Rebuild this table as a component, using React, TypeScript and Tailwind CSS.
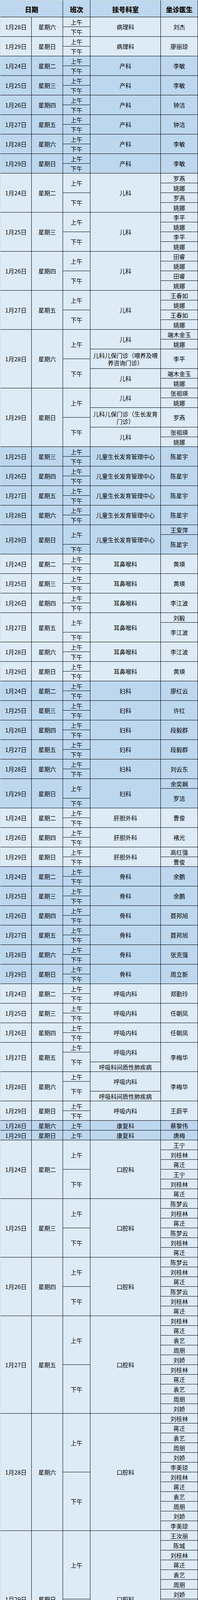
import React from "react";

type Part = [string, number];
type Block = {
  date: string;
  week: string;
  bg: string;
  shifts: Part[];
  depts: Part[];
  docs: Part[];
};

const H: Record<number, string> = {
  1: "h-[24px]",
  2: "h-[49px]",
  3: "h-[74px]",
  4: "h-[99px]",
  5: "h-[124px]",
  6: "h-[149px]",
  7: "h-[174px]",
  8: "h-[199px]",
  9: "h-[224px]",
  10: "h-[249px]",
  11: "h-[274px]",
  12: "h-[299px]",
  13: "h-[324px]",
  14: "h-[349px]",
};

const L = "bg-[#ddebf7]";
const D = "bg-[#bdd7ee]";

const AMPM: Part[] = [
  ["上午", 1],
  ["下午", 1],
];

const simple = (bg: string, date: string, week: string, dept: string, doc: string): Block => ({
  bg,
  date,
  week,
  shifts: AMPM,
  depts: [[dept, 2]],
  docs: [[doc, 2]],
});

const kids = (date: string, week: string, a: string, b: string): Block => ({
  bg: L,
  date,
  week,
  shifts: [
    ["上午", 2],
    ["下午", 2],
  ],
  depts: [["儿科", 4]],
  docs: [
    [a, 1],
    [b, 1],
    [a, 1],
    [b, 1],
  ],
});

const oral = (date: string, week: string, names: string[]): Block => ({
  bg: L,
  date,
  week,
  shifts: [
    ["上午", names.length],
    ["下午", names.length],
  ],
  depts: [["口腔科", names.length * 2]],
  docs: [...names, ...names].map((n) => [n, 1] as Part),
});

const blocks: Block[] = [
  simple(L, "1月28日", "星期六", "病理科", "刘杰"),
  simple(L, "1月29日", "星期日", "病理科", "廖丽琼"),

  simple(D, "1月24日", "星期二", "产科", "李敏"),
  simple(D, "1月25日", "星期三", "产科", "李敏"),
  simple(D, "1月26日", "星期四", "产科", "钟洁"),
  simple(D, "1月27日", "星期五", "产科", "钟洁"),
  simple(D, "1月28日", "星期六", "产科", "李敏"),
  simple(D, "1月29日", "星期日", "产科", "李敏"),

  kids("1月24日", "星期二", "罗燕", "姚娜"),
  kids("1月25日", "星期三", "李平", "姚娜"),
  kids("1月26日", "星期四", "田睿", "姚娜"),
  kids("1月27日", "星期五", "王春如", "姚娜"),
  {
    bg: L,
    date: "1月28日",
    week: "星期六",
    shifts: [
      ["上午", 3],
      ["下午", 3],
    ],
    depts: [
      ["儿科", 2],
      ["儿科儿保门诊（喂养及喂养咨询门诊）", 2],
      ["儿科", 2],
    ],
    docs: [
      ["端木金玉", 1],
      ["姚娜", 1],
      ["李平", 2],
      ["端木金玉", 1],
      ["姚娜", 1],
    ],
  },
  {
    bg: L,
    date: "1月29日",
    week: "星期日",
    shifts: [
      ["上午", 3],
      ["下午", 3],
    ],
    depts: [
      ["儿科", 2],
      ["儿科儿保门诊（生长发育门诊）", 2],
      ["儿科", 2],
    ],
    docs: [
      ["张祖瑛", 1],
      ["姚娜", 1],
      ["罗燕", 2],
      ["张祖瑛", 1],
      ["姚娜", 1],
    ],
  },

  simple(D, "1月25日", "星期三", "儿童生长发育管理中心", "陈星宇"),
  simple(D, "1月26日", "星期四", "儿童生长发育管理中心", "陈星宇"),
  simple(D, "1月27日", "星期五", "儿童生长发育管理中心", "陈星宇"),
  simple(D, "1月28日", "星期六", "儿童生长发育管理中心", "陈星宇"),
  {
    bg: D,
    date: "1月29日",
    week: "星期日",
    shifts: [
      ["上午", 2],
      ["下午", 1],
    ],
    depts: [["儿童生长发育管理中心", 3]],
    docs: [
      ["王爱萍", 1],
      ["陈星宇", 2],
    ],
  },

  simple(L, "1月24日", "星期二", "耳鼻喉科", "黄瑛"),
  simple(L, "1月25日", "星期三", "耳鼻喉科", "黄瑛"),
  simple(L, "1月26日", "星期四", "耳鼻喉科", "李江波"),
  {
    bg: L,
    date: "1月27日",
    week: "星期五",
    shifts: [
      ["上午", 2],
      ["下午", 1],
    ],
    depts: [["耳鼻喉科", 3]],
    docs: [
      ["刘毅", 1],
      ["李江波", 2],
    ],
  },
  simple(L, "1月28日", "星期六", "耳鼻喉科", "李江波"),
  simple(L, "1月29日", "星期日", "耳鼻喉科", "黄瑛"),

  simple(D, "1月24日", "星期二", "妇科", "廖红云"),
  simple(D, "1月25日", "星期三", "妇科", "许红"),
  simple(D, "1月26日", "星期四", "妇科", "段毅群"),
  simple(D, "1月27日", "星期五", "妇科", "段毅群"),
  simple(D, "1月28日", "星期六", "妇科", "刘云东"),
  {
    bg: D,
    date: "1月29日",
    week: "星期日",
    shifts: [
      ["上午", 2],
      ["下午", 1],
    ],
    depts: [["妇科", 3]],
    docs: [
      ["余奕娴", 1],
      ["罗洁", 2],
    ],
  },

  simple(L, "1月24日", "星期二", "肝胆外科", "曹俊"),
  simple(L, "1月26日", "星期四", "肝胆外科", "褚光"),
  {
    bg: L,
    date: "1月29日",
    week: "星期日",
    shifts: AMPM,
    depts: [["肝胆外科", 2]],
    docs: [
      ["高红强", 1],
      ["曹俊", 1],
    ],
  },

  simple(D, "1月24日", "星期二", "骨科", "余鹏"),
  simple(D, "1月25日", "星期三", "骨科", "余鹏"),
  simple(D, "1月26日", "星期四", "骨科", "聂邦旭"),
  simple(D, "1月27日", "星期五", "骨科", "聂邦旭"),
  simple(D, "1月28日", "星期六", "骨科", "张克强"),
  simple(D, "1月29日", "星期日", "骨科", "周立新"),

  simple(L, "1月24日", "星期二", "呼吸内科", "郑勤玲"),
  simple(L, "1月25日", "星期三", "呼吸内科", "任朝凤"),
  simple(L, "1月26日", "星期四", "呼吸内科", "任朝凤"),
  {
    bg: L,
    date: "1月27日",
    week: "星期五",
    shifts: [
      ["上午", 1],
      ["下午", 2],
    ],
    depts: [
      ["呼吸内科", 2],
      ["呼吸科间质性肺疾病", 1],
    ],
    docs: [["李梅华", 3]],
  },
  {
    bg: L,
    date: "1月28日",
    week: "星期六",
    shifts: [
      ["上午", 1],
      ["下午", 2],
    ],
    depts: [
      ["呼吸内科", 2],
      ["呼吸科间质性肺疾病", 1],
    ],
    docs: [["李梅华", 3]],
  },
  simple(L, "1月29日", "星期日", "呼吸内科", "王蔚平"),

  {
    bg: D,
    date: "1月28日",
    week: "星期六",
    shifts: [["上午", 1]],
    depts: [["康复科", 1]],
    docs: [["蔡黎伟", 1]],
  },
  {
    bg: D,
    date: "1月29日",
    week: "星期日",
    shifts: [["上午", 1]],
    depts: [["康复科", 1]],
    docs: [["唐梅", 1]],
  },

  oral("1月24日", "星期二", ["王宁", "刘桂林", "蒋迁"]),
  oral("1月25日", "星期三", ["陈梦云", "刘桂林", "蒋迁"]),
  oral("1月26日", "星期四", ["陈梦云", "刘桂林", "蒋迁"]),
  oral("1月27日", "星期五", ["刘桂林", "蒋迁", "袁艺", "周朋", "刘娇"]),
  oral("1月28日", "星期六", ["刘桂林", "蒋迁", "袁艺", "周朋", "刘娇", "李美琼"]),
  oral("1月29日", "星期日", ["王汝丽", "陈城", "刘桂林", "蒋迁", "袁艺", "周朋", "刘娇"]),
];

const cellText =
  "flex items-center justify-center px-1 text-center text-[15px] leading-[19px] text-black";

const headCls =
  "bg-[#bdd7ee] flex shrink-0 items-center justify-center pt-[3px] text-[17px] leading-[20px] font-bold text-black [text-shadow:1px_1px_1px_#8a8a8a]";

function Column({ parts, width, bg }: { parts: Part[]; width: string; bg: string }) {
  return (
    <div className={`${width} flex shrink-0 flex-col gap-px`}>
      {parts.map(([text, span], i) => (
        <div key={i} className={`${H[span]} ${bg} shrink-0 ${cellText}`}>
          {text}
        </div>
      ))}
    </div>
  );
}

function Row({ b }: { b: Block }) {
  return (
    <div className="flex gap-px">
      <div className={`w-[79px] shrink-0 ${b.bg} ${cellText}`}>{b.date}</div>
      <div className={`w-[79px] shrink-0 ${b.bg} ${cellText}`}>{b.week}</div>
      <Column parts={b.shifts} width="w-[69px]" bg={b.bg} />
      <Column parts={b.depts} width="w-[179px]" bg={b.bg} />
      <Column parts={b.docs} width="w-[94px]" bg={b.bg} />
    </div>
  );
}

export default function App() {
  return (
    <div className="w-[506px] bg-white font-['Noto_Sans_CJK_SC','Noto_Sans',sans-serif]">
      <div className="border-l border-t border-[#d4d4d4]">
        <div className="flex flex-col gap-px bg-black border-r border-b border-black">
          <div className="flex h-[42px] gap-px">
            <div className={`w-[159px] ${headCls}`}>日期</div>
            <div className={`w-[69px] ${headCls}`}>班次</div>
            <div className={`w-[179px] ${headCls}`}>挂号科室</div>
            <div className={`w-[94px] ${headCls}`}>坐诊医生</div>
          </div>
          {blocks.map((b, i) => (
            <Row key={i} b={b} />
          ))}
        </div>
      </div>
    </div>
  );
}
